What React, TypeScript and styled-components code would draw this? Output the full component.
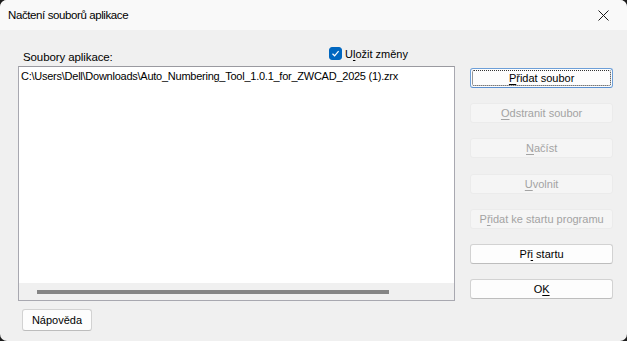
import React, { useState } from "react";
import styled, { createGlobalStyle } from "styled-components";

const GlobalStyle = createGlobalStyle`
  html, body {
    margin: 0;
    padding: 0;
    background: #1c1c1c;
  }
  body {
    font-family: "Liberation Sans", Arial, sans-serif;
  }
`;

const Window = styled.div`
  width: 627px;
  height: 341px;
  background: #f0f0f0;
  border-radius: 7px;
  overflow: hidden;
  display: flex;
  flex-direction: column;
  font-size: 11px;
  color: #000;
`;

const TitleBar = styled.div`
  height: 30px;
  background: #f9f9f9;
  display: flex;
  align-items: center;
  justify-content: space-between;
  padding-left: 8px;
  box-sizing: border-box;
`;

const Title = styled.span`
  font-size: 11.5px;
  letter-spacing: -0.4px;
`;

const CloseButton = styled.button`
  width: 46px;
  height: 30px;
  border: none;
  background: transparent;
  display: flex;
  align-items: center;
  justify-content: center;
  padding: 0;
  margin-right: 1px;
`;

const Body = styled.div`
  flex: 1;
  display: flex;
  flex-direction: column;
  padding: 0 14px 0 18px;
`;

const Main = styled.div`
  display: flex;
`;

const LeftColumn = styled.div`
  width: 438px;
  display: flex;
  flex-direction: column;
`;

const Header = styled.div`
  height: 36px;
  display: flex;
  align-items: flex-end;
  position: relative;
`;

const ListLabel = styled.label`
  margin-left: 5px;
  margin-bottom: 3px;
  font-size: 11.5px;
  letter-spacing: -0.1px;
`;

const SaveToggle = styled.label`
  position: absolute;
  left: 311px;
  top: 17px;
  display: flex;
  align-items: center;
  gap: 3px;
  cursor: default;
`;

const CheckBox = styled.span<{ $checked: boolean }>`
  width: 13px;
  height: 13px;
  border-radius: 3px;
  box-sizing: border-box;
  background: ${(p) => (p.$checked ? "#0067c0" : "#fff")};
  border: 1px solid ${(p) => (p.$checked ? "#0067c0" : "#555")};
  display: flex;
  align-items: center;
  justify-content: center;
`;

const ListBox = styled.div`
  height: 235px;
  box-sizing: border-box;
  border: 1px solid #a8a8b0;
  border-top-color: #9a9aa0;
  background: #fff;
  display: flex;
  flex-direction: column;
`;

const ListItems = styled.div`
  flex: 1;
  padding: 2px 0 0 2px;
`;

const ListItem = styled.div`
  height: 15px;
  line-height: 15px;
  white-space: nowrap;
  letter-spacing: -0.25px;
`;

const ScrollTrack = styled.div`
  height: 17px;
  background: #f0f0f0;
  display: flex;
  align-items: center;
  padding-left: 18px;
`;

const ScrollThumb = styled.div`
  width: 352px;
  height: 4px;
  background: #858585;
`;

const RightColumn = styled.div`
  margin-left: 15px;
  padding-top: 38px;
  display: grid;
  grid-auto-rows: 20px;
  row-gap: 15.2px;
  width: 143px;
`;

const DialogButton = styled.button<{ $focused?: boolean }>`
  height: 20px;
  box-sizing: border-box;
  font-family: inherit;
  font-size: 11px;
  padding: 0;
  border-radius: 3px;
  background: #fdfdfd;
  color: #000;
  border: 1px solid ${(p) => (p.$focused ? "#6d9fd8" : "#d2d2d2")};
  border-bottom-color: ${(p) => (p.$focused ? "#5a8fd0" : "#bdbdbd")};
  position: relative;

  &::after {
    content: "";
    display: ${(p) => (p.$focused ? "block" : "none")};
    position: absolute;
    inset: 1px;
    border: 1px dotted #333;
    border-radius: 2px;
  }

  &:disabled {
    background: #f5f5f5;
    border-color: #ebebeb;
    color: #a3a3a3;
  }
`;

const Footer = styled.div`
  padding: 8px 0 0 4px;
`;

const HelpButton = styled(DialogButton)`
  width: 70px;
  height: 22px;
`;

const Key = styled.span`
  text-decoration: underline;
  text-underline-offset: 2px;
`;

const App: React.FC = () => {
  const [save, setSave] = useState(true);

  return (
    <>
      <GlobalStyle />
      <Window>
        <TitleBar>
          <Title>Načtení souborů aplikace</Title>
          <CloseButton aria-label="Zavřít">
            <svg width="11" height="11" viewBox="0 0 11 11">
              <path d="M0.5 0.5 L10.5 10.5 M10.5 0.5 L0.5 10.5" stroke="#1a1a1a" strokeWidth="1" />
            </svg>
          </CloseButton>
        </TitleBar>
        <Body>
          <Main>
            <LeftColumn>
              <Header>
                <ListLabel>Soubory aplikace:</ListLabel>
                <SaveToggle onClick={() => setSave(!save)}>
                  <CheckBox $checked={save}>
                    {save && (
                      <svg width="9" height="9" viewBox="0 0 9 9">
                        <path d="M1.5 4.8 L3.6 6.8 L7.6 2.2" fill="none" stroke="#fff" strokeWidth="1.2" />
                      </svg>
                    )}
                  </CheckBox>
                  <span>
                    U<Key>l</Key>ožit změny
                  </span>
                </SaveToggle>
              </Header>
              <ListBox>
                <ListItems>
                  <ListItem>C:\Users\Dell\Downloads\Auto_Numbering_Tool_1.0.1_for_ZWCAD_2025 (1).zrx</ListItem>
                </ListItems>
                <ScrollTrack>
                  <ScrollThumb />
                </ScrollTrack>
              </ListBox>
            </LeftColumn>
            <RightColumn>
              <DialogButton $focused>
                <Key>P</Key>řidat soubor
              </DialogButton>
              <DialogButton disabled>
                <Key>O</Key>dstranit soubor
              </DialogButton>
              <DialogButton disabled>
                <Key>N</Key>ačíst
              </DialogButton>
              <DialogButton disabled>
                <Key>U</Key>volnit
              </DialogButton>
              <DialogButton disabled>
                P<Key>ř</Key>idat ke startu programu
              </DialogButton>
              <DialogButton>
                Př<Key>i</Key> startu
              </DialogButton>
              <DialogButton>
                O<Key>K</Key>
              </DialogButton>
            </RightColumn>
          </Main>
          <Footer>
            <HelpButton>Nápověda</HelpButton>
          </Footer>
        </Body>
      </Window>
    </>
  );
};

export default App;
